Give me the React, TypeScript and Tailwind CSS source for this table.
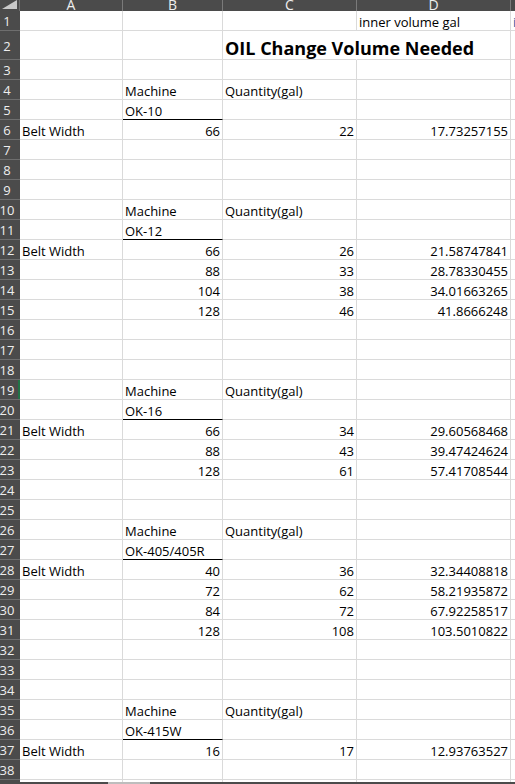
import React from 'react';

type Cell = { t: string; r?: boolean; cls?: string };
type RowDef = {
  n: number;
  h: number;
  a?: Cell;
  b?: Cell;
  c?: Cell;
  d?: Cell;
  e?: Cell;
  underB?: boolean;
  noCR?: boolean;
  active?: boolean;
};

const L = (t: string, cls?: string): Cell => ({ t, cls });
const R = (t: string): Cell => ({ t, r: true });

const defs: Record<number, Partial<RowDef>> = {
  1: { d: L('inner volume gal', 'text-[#1f5aa6]'), e: L('inner volume gal', 'text-[#1f5aa6]') },
  2: { c: L('OIL Change Volume Needed', 'font-bold text-[18px] pb-[3px]'), noCR: true },
  4: { b: L('Machine'), c: L('Quantity(gal)') },
  5: { b: L('OK-10'), underB: true },
  6: { a: L('Belt Width'), b: R('66'), c: R('22'), d: R('17.73257155') },
  10: { b: L('Machine'), c: L('Quantity(gal)') },
  11: { b: L('OK-12'), underB: true },
  12: { a: L('Belt Width'), b: R('66'), c: R('26'), d: R('21.58747841') },
  13: { b: R('88'), c: R('33'), d: R('28.78330455') },
  14: { b: R('104'), c: R('38'), d: R('34.01663265') },
  15: { b: R('128'), c: R('46'), d: R('41.8666248') },
  19: { b: L('Machine'), c: L('Quantity(gal)'), active: true },
  20: { b: L('OK-16'), underB: true },
  21: { a: L('Belt Width'), b: R('66'), c: R('34'), d: R('29.60568468') },
  22: { b: R('88'), c: R('43'), d: R('39.47424624') },
  23: { b: R('128'), c: R('61'), d: R('57.41708544') },
  26: { b: L('Machine'), c: L('Quantity(gal)') },
  27: { b: L('OK-405/405R'), underB: true },
  28: { a: L('Belt Width'), b: R('40'), c: R('36'), d: R('32.34408818') },
  29: { b: R('72'), c: R('62'), d: R('58.21935872') },
  30: { b: R('84'), c: R('72'), d: R('67.92258517') },
  31: { b: R('128'), c: R('108'), d: R('103.5010822') },
  35: { b: L('Machine'), c: L('Quantity(gal)') },
  36: { b: L('OK-415W'), underB: true },
  37: { a: L('Belt Width'), b: R('16'), c: R('17'), d: R('12.93763527') },
};

const rows: RowDef[] = Array.from({ length: 38 }, (_, i) => {
  const n = i + 1;
  const h = n === 1 ? 20 : n === 2 ? 29 : 20;
  return { n, h, ...(defs[n] || {}) } as RowDef;
});

function CellView({ cell, w, extra }: { cell?: Cell; w: string; extra?: string }) {
  return (
    <div
      className={`${w} shrink-0 h-full border-b border-r border-[#dadada] flex items-end whitespace-nowrap ${
        cell?.r ? 'justify-end pr-[2px]' : 'justify-start pl-[2px]'
      } ${extra || ''}`}
    >
      {cell && (
        <span className={`leading-[15px] text-[13px] text-black ${cell.cls || ''}`}>{cell.t}</span>
      )}
    </div>
  );
}

export default function App() {
  const cols = [
    { l: 'A', w: 'w-[103px]' },
    { l: 'B', w: 'w-[100px]' },
    { l: 'C', w: 'w-[134px]' },
    { l: 'D', w: 'w-[154px]' },
  ];
  return (
    <div
      className="w-[515px] h-[784px] overflow-hidden bg-white flex flex-col"
      style={{ fontFamily: '"Open Sans", "Noto Sans", sans-serif' }}
    >
      {/* column header */}
      <div className="flex h-[11px] shrink-0 bg-[#4b4b4b] overflow-hidden">
        <div className="w-[20px] shrink-0 h-full border-r border-[#6e6e6e] relative">
          <svg width="20" height="11" className="absolute left-0 top-0">
            <polygon points="2,9 17,9 17,0" fill="#c9c9c9" />
          </svg>
        </div>
        {cols.map((c) => (
          <div
            key={c.l}
            className={`${c.w} shrink-0 h-full border-r border-[#7a7a7a] flex items-end justify-center overflow-hidden`}
          >
            <span className="text-[14px] leading-none text-[#eeeeee] translate-y-[1px]">{c.l}</span>
          </div>
        ))}
        <div className="flex-1 h-full" />
      </div>

      {rows.map((row) => (
        <div key={row.n} className="flex shrink-0" style={{ height: row.h }}>
          <div
            className={`w-[20px] shrink-0 h-full bg-[#4b4b4b] border-b border-[#6e6e6e] flex items-center pr-[6px] justify-center relative`}
          >
            <span className="text-[13px] leading-none text-[#eeeeee] translate-y-[1px]">{row.n}</span>
            {row.active && <div className="absolute right-0 top-0 h-full w-[2px] bg-[#217346]" />}
          </div>
          <CellView cell={row.a} w="w-[103px]" />
          <CellView
            cell={row.b}
            w="w-[100px]"
            extra={row.underB ? '!border-b-black' : ''}
          />
          <CellView
            cell={row.c}
            w="w-[134px]"
            extra={row.noCR ? '!border-r-transparent overflow-visible relative z-10' : ''}
          />
          <CellView cell={row.d} w="w-[154px]" />
          <div className="flex-1 h-full border-b border-[#dadada] flex items-end pl-[2px] overflow-hidden whitespace-nowrap">
            {row.e && (
              <span className={`leading-[15px] text-[13px] ${row.e.cls || ''}`}>{row.e.t}</span>
            )}
          </div>
        </div>
      ))}

      {/* partial row 39 + bottom bar */}
      <div className="flex shrink-0 h-[2px]">
        <div className="w-[20px] shrink-0 h-full bg-[#4b4b4b]" />
        <div className="w-[103px] shrink-0 h-full border-r border-[#dadada]" />
        <div className="w-[100px] shrink-0 h-full border-r border-[#dadada]" />
        <div className="w-[134px] shrink-0 h-full border-r border-[#dadada]" />
        <div className="w-[154px] shrink-0 h-full border-r border-[#dadada]" />
        <div className="flex-1" />
      </div>
      <div className="flex shrink-0 h-[2px]">
        <div className="w-[20px] shrink-0 h-full bg-[#4b4b4b]" />
        <div className="w-[88px] shrink-0 h-full bg-[#4b4b4b]" />
        <div className="w-[42px] shrink-0 h-full bg-[#bdbdbd]" />
        <div className="flex-1 h-full bg-[#4b4b4b]" />
      </div>
    </div>
  );
}
